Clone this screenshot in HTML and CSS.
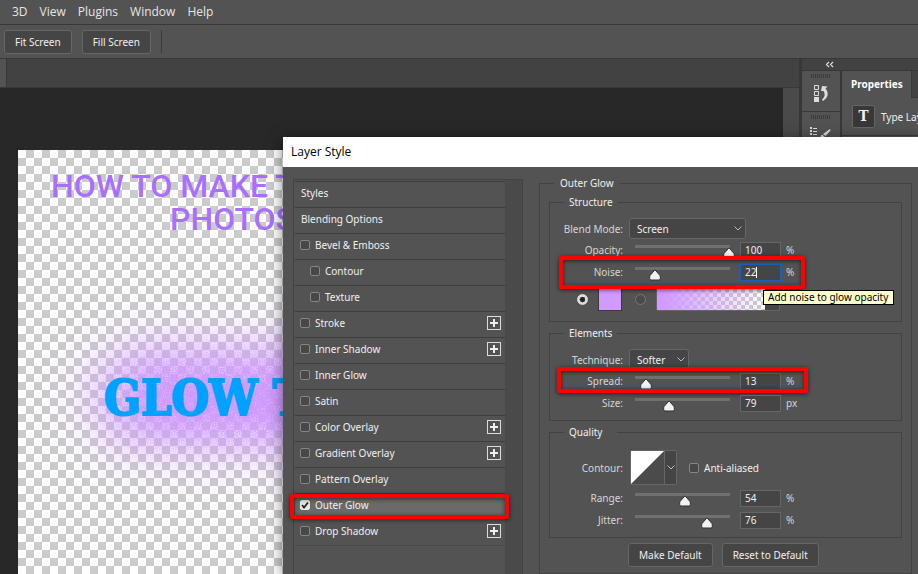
FILE: index.html
```html
<!DOCTYPE html>
<html lang="en">
<head>
<meta charset="utf-8">
<title>Layer Style</title>
<link rel="stylesheet" href="styles.css">
</head>
<body>
<div class="app">
  <nav class="menubar">
    <a href="#">3D</a><a href="#">View</a><a href="#">Plugins</a><a href="#">Window</a><a href="#">Help</a>
  </nav>
  <div class="options">
    <button class="btn" type="button">Fit Screen</button>
    <button class="btn" type="button">Fill Screen</button>
    <span class="divider"></span>
  </div>
  <div class="workspace">
    <main class="editor">
      <div class="tabs"><span class="doc-tab"></span></div>
      <div class="stage">
        <div class="document">
          <svg class="glow" width="600" height="300" viewBox="0 0 600 300" aria-hidden="true">
            <defs>
              <filter id="noise-glow" x="0" y="0" width="600" height="300" filterUnits="userSpaceOnUse" color-interpolation-filters="sRGB">
                <feGaussianBlur in="SourceAlpha" stdDeviation="32 30" result="soft"/>
                <feTurbulence type="fractalNoise" baseFrequency="0.8" numOctaves="2" seed="4" result="n"/>
                <feColorMatrix in="n" type="matrix" values="0 0 0 0 0  0 0 0 0 0  0 0 0 0 0  2.2 0 0 0 -0.6" result="grain"/>
                <feComposite in="soft" in2="grain" operator="arithmetic" k1="0.6" k2="0.85" result="alpha"/>
                <feFlood flood-color="#cf99ff"/>
                <feComposite in2="alpha" operator="in"/>
              </filter>
            </defs>
            <rect x="84" y="106" width="440" height="84" rx="36" filter="url(#noise-glow)"/>
          </svg>
          <h1 class="headline"><span>HOW TO MAKE T</span><span class="second">PHOTOS</span></h1>
          <p class="glow-text">GLOW T</p>
        </div>
        <div class="scrollbar"></div>
      </div>
    </main>
    <aside class="dock">
      <div class="dock-head">
        <svg width="9" height="7" viewBox="0 0 9 7"><path d="M4 1 1.500 3.500 4 6M8 1 5.500 3.500 8 6" fill="none" stroke="#ddd" stroke-width="1.200"/></svg>
      </div>
      <div class="dock-body">
        <div class="strip">
          <div class="group">
            <span class="grip"></span>
            <svg width="18" height="20" viewBox="0 0 18 20"><g fill="none" stroke="#ddd"><path d="M2.500 1.500h4v4h-4zM2.500 7.500h4v4h-4z"/></g><path d="M2 13h5v5H2zM9 7l1-5 5.500.5-2 2c3.500 4 3 9-2.500 12.500l-1-1.500c3-2.500 3.500-5.500 1.500-8.500z" fill="#ddd"/></svg>
          </div>
          <div class="group">
            <span class="grip"></span>
            <svg width="22" height="20" viewBox="0 0 22 20"><path d="M1 2h2v2H1zM1 5h2v2H1zM1 8h2v2H1zM4 3h4v1H4zM4 6h4v1H4zM4 9h4v1H4zM21 4l.5 1.500-5 5.500-2.500-2zM13 9.500l2.500 2c-1 2.500-3 3-5.500 2.500 1.500-1 1.500-3.500 3-4.500z" fill="#ddd"/></svg>
          </div>
        </div>
        <div class="panel">
          <div class="panel-tabs"><b>Properties</b><span class="rest"></span></div>
          <div class="type-row"><span class="type-icon">T</span><span>Type Layer</span></div>
        </div>
      </div>
    </aside>
  </div>
</div>

<section class="dialog" role="dialog" aria-labelledby="title">
  <h2 class="title" id="title">Layer Style</h2>
  <div class="dialog-body">
    <div class="effects">
      <ul class="list">
        <li>Styles</li>
        <li>Blending Options</li>
        <li><label><input class="check" type="checkbox">Bevel &amp; Emboss</label></li>
        <li class="sub"><label><input class="check" type="checkbox">Contour</label></li>
        <li class="sub"><label><input class="check" type="checkbox">Texture</label></li>
        <li><label><input class="check" type="checkbox">Stroke</label><button class="add" type="button" aria-label="Add stroke"></button></li>
        <li><label><input class="check" type="checkbox">Inner Shadow</label><button class="add" type="button" aria-label="Add inner shadow"></button></li>
        <li><label><input class="check" type="checkbox">Inner Glow</label></li>
        <li><label><input class="check" type="checkbox">Satin</label></li>
        <li><label><input class="check" type="checkbox">Color Overlay</label><button class="add" type="button" aria-label="Add color overlay"></button></li>
        <li><label><input class="check" type="checkbox">Gradient Overlay</label><button class="add" type="button" aria-label="Add gradient overlay"></button></li>
        <li><label><input class="check" type="checkbox">Pattern Overlay</label></li>
        <li class="active"><label><input class="check" type="checkbox" checked>Outer Glow</label><span class="mark mark-effect"></span></li>
        <li><label><input class="check" type="checkbox">Drop Shadow</label><button class="add" type="button" aria-label="Add drop shadow"></button></li>
      </ul>
      <div class="track"></div>
    </div>

    <fieldset class="settings">
      <legend>Outer Glow</legend>

      <fieldset class="group-box structure">
        <legend>Structure</legend>
        <div class="row">
          <label for="blend">Blend Mode:</label>
          <select class="select wide" id="blend"><option>Screen</option></select>
        </div>
        <div class="row">
          <label for="opacity">Opacity:</label>
          <input class="slider" type="range" value="100" aria-label="Opacity slider">
          <input class="num" id="opacity" type="text" value="100"><span>%</span>
        </div>
        <div class="row">
          <label for="noise">Noise:</label>
          <input class="slider" type="range" value="21" aria-label="Noise slider">
          <span class="num-wrap"><input class="num editing" id="noise" type="text" value="22"><i class="caret"></i></span><span>%</span>
          <span class="mark mark-noise"></span>
          <span class="tooltip" role="tooltip">Add noise to glow opacity</span>
        </div>
        <div class="paint">
          <input class="radio" type="radio" name="fill" checked aria-label="Solid color">
          <button class="swatch" type="button" aria-label="Glow color"></button>
          <input class="radio second" type="radio" name="fill" aria-label="Gradient">
          <button class="gradient" type="button" aria-label="Glow gradient"><span></span></button>
        </div>
      </fieldset>

      <fieldset class="group-box">
        <legend>Elements</legend>
        <div class="row">
          <label for="technique">Technique:</label>
          <select class="select narrow" id="technique"><option>Softer</option></select>
        </div>
        <div class="row">
          <label for="spread">Spread:</label>
          <input class="slider" type="range" value="12" aria-label="Spread slider">
          <input class="num" id="spread" type="text" value="13"><span>%</span>
          <span class="mark mark-spread"></span>
        </div>
        <div class="row">
          <label for="size">Size:</label>
          <input class="slider" type="range" value="79" max="220" aria-label="Size slider">
          <input class="num" id="size" type="text" value="79"><span>px</span>
        </div>
      </fieldset>

      <fieldset class="group-box">
        <legend>Quality</legend>
        <div class="row contour-row">
          <label for="contour">Contour:</label>
          <div class="contour-tools">
            <button class="contour" id="contour" type="button">
              <svg width="33" height="33" viewBox="0 0 33 33"><path d="M0 0h33L0 33z" fill="#fff"/></svg>
              <span class="drop"></span>
            </button>
            <label class="alias"><input class="check" type="checkbox">Anti-aliased</label>
          </div>
        </div>
        <div class="row">
          <label for="range">Range:</label>
          <input class="slider" type="range" value="53" aria-label="Range slider">
          <input class="num" id="range" type="text" value="54"><span>%</span>
        </div>
        <div class="row">
          <label for="jitter">Jitter:</label>
          <input class="slider" type="range" value="77" aria-label="Jitter slider">
          <input class="num" id="jitter" type="text" value="76"><span>%</span>
        </div>
      </fieldset>

      <div class="actions">
        <button class="btn" type="button">Make Default</button>
        <button class="btn" type="button">Reset to Default</button>
      </div>
    </fieldset>
  </div>
</section>
</body>
</html>
```
FILE: styles.css
```css
* { box-sizing: border-box; }

body {
  margin: 0;
  height: 100vh;
  overflow: hidden;
  background: #282828;
  color: #f0f0f0;
  font: 10px/16px "Noto Sans", "Open Sans", sans-serif;
}

button, input, select { font: inherit; color: inherit; margin: 0; }

.app { display: flex; flex-direction: column; height: 100vh; }

/* Menu and options bars */
.menubar {
  display: flex;
  gap: 12px;
  height: 25px;
  padding: 0 12px;
  background: #535353;
  border-bottom: 1px solid #383838;
  font-family: "Open Sans", sans-serif;
  font-size: 12px;
  line-height: 24px;
}
.menubar a { color: #e6e6e6; text-decoration: none; }

.options {
  display: flex;
  align-items: center;
  gap: 10px;
  height: 34px;
  padding: 0 4px;
  background: #535353;
  border-bottom: 1px solid #383838;
}
.btn {
  height: 24px;
  padding: 0 11px;
  background: #454545;
  border: 1px solid #666;
  border-radius: 3px;
  white-space: nowrap;
}
.options .btn { padding: 0 10px; }
.divider { width: 1px; height: 23px; background: #3c3c3c; }

/* Workspace */
.workspace { display: flex; flex: 1; min-height: 0; }
.editor { display: flex; flex-direction: column; flex: 1; min-width: 0; }
.tabs { height: 29px; background: #424242; border-bottom: 1px solid #383838; }
.doc-tab { display: block; width: 7px; height: 28px; background: #535353; border-right: 1px solid #383838; }
.stage { display: flex; flex: 1; min-height: 0; }
.document {
  position: relative;
  flex: 1;
  margin: 62px 0 0 18px;
  overflow: hidden;
  background: repeating-conic-gradient(#cbcbcb 0 25%, #fff 0 50%) 0 0 / 16px 16px;
}
.scrollbar { width: 16px; background: #4a4a4a; }
.headline {
  position: relative;
  margin: 0;
  padding: 20px 0 0 33px;
  color: #a970ff;
  font: 500 32px/33px Roboto, sans-serif;
  white-space: nowrap;
}
.headline span { display: block; }
.headline .second { padding-left: 119px; }
.glow { position: absolute; left: 0; top: 100px; }
.glow-text {
  position: relative;
  margin: 0;
  padding: 133px 0 0 86px;
  color: #00a2ff;
  font: bold 48px/58px "DejaVu Serif Condensed", "DejaVu Serif", serif;
  -webkit-text-stroke: 2px #00a2ff;
  white-space: nowrap;
}

/* Right dock */
.dock { width: 119px; border-left: 3px solid #383838; background: #383838; }
.dock-head {
  height: 12px;
  padding: 2px 0 0 23px;
  background: #424242;
  border-bottom: 1px solid #383838;
  line-height: 0;
}
.dock-body { display: flex; gap: 2px; }
.strip { width: 38px; }
.group { height: 40px; margin-bottom: 1px; padding: 3px 0 0 9px; background: #535353; }
.group svg { display: block; margin: 6px 0 0 1px; }
.group + .group svg { margin: 6px 0 0 -2px; }
.grip { display: block; width: 20px; height: 4px; background: repeating-linear-gradient(90deg, #3c3c3c 0 1px, #535353 1px 2px); }
.panel { flex: 1; overflow: hidden; background: #535353; white-space: nowrap; }
.panel-tabs { display: flex; height: 27px; line-height: 26px; }
.panel-tabs b { padding: 0 8px 0 9px; color: #fff; }
.rest { flex: 1; background: #424242; border: solid #383838; border-width: 0 0 1px 1px; }
.type-row { display: flex; align-items: center; gap: 6px; height: 38px; padding-left: 10px; border-bottom: 1px solid #3c3c3c; }
.type-icon {
  flex: none;
  width: 23px;
  height: 23px;
  background: #383838;
  border: 1px solid #666;
  border-radius: 2px;
  font: bold 15px/21px "DejaVu Serif Condensed", serif;
  text-align: center;
}

/* Dialog */
.dialog {
  position: absolute;
  inset: 137px 0 0 283px;
  display: flex;
  flex-direction: column;
  background: #535353;
  box-shadow: 0 2px 14px rgba(0, 0, 0, 0.5);
}
.title {
  margin: 0;
  height: 30px;
  padding-left: 8px;
  background: #fff;
  color: #000;
  font-family: "Open Sans", sans-serif;
  font-size: 12px;
  font-weight: 400;
  line-height: 30px;
}
.dialog-body { display: flex; flex: 1; gap: 16px; min-height: 0; padding: 0 6px 0 10px; }

.effects {
  display: flex;
  width: 230px;
  margin-top: 12px;
  border: 1px solid #424242;
  border-bottom: 0;
}
.list { flex: 1; margin: 0; padding: 1px 0 0 1px; list-style: none; }
.list li {
  position: relative;
  display: flex;
  align-items: center;
  justify-content: space-between;
  height: 26px;
  padding: 0 4px 3px 6px;
  border-top: 1px solid #3d3d3d;
}
.list li:last-child { height: 27px; padding-bottom: 3px; border-bottom: 1px solid #484848; }
.list li.active { background: #6a6a6a; }
.list label, .alias { display: flex; align-items: center; gap: 5px; }
.list li:has(label) { padding-left: 5px; }
.list li.sub:has(label) { padding-left: 15px; }
.track { width: 17px; background: #4a4a4a; }

.check {
  appearance: none;
  width: 10px;
  height: 10px;
  background: #484848;
  border: 1px solid #868686;
  border-radius: 2px;
}
.check:checked {
  border-color: #e6e6e6;
  background: #e6e6e6 url("data:image/svg+xml,%3Csvg xmlns='http://www.w3.org/2000/svg' viewBox='0 0 8 8'%3E%3Cpath d='M1 4l2 2.500L7 1.500' fill='none' stroke='%23222' stroke-width='1.800'/%3E%3C/svg%3E");
}
.add {
  width: 14px;
  height: 14px;
  padding: 0;
  border: 1px solid #ddd;
  background:
    linear-gradient(#eee, #eee) center / 8px 2px no-repeat,
    linear-gradient(#eee, #eee) center / 2px 8px no-repeat;
}

/* Settings */
fieldset { min-width: 0; margin: 0; border: 1px solid #424242; }
legend { min-width: 53px; padding: 0 5px; white-space: nowrap; }
.settings { flex: 1; margin-top: 8px; padding: 3px 9px 0; }
.settings > legend { min-width: 63px; margin-left: 5px; padding: 0 6px; }
.group-box { margin-bottom: 3px; padding: 8px 0 6px; }
.group-box legend { margin-left: 14px; }
.structure { padding-bottom: 10px; }

.row {
  position: relative;
  display: grid;
  grid-template-columns: 74px 106px 41px auto;
  column-gap: 5px;
  align-items: center;
  height: 22px;
  color: #d6d6d6;
}
.row:first-of-type { height: 21px; }
.row > label { padding-right: 1px; text-align: right; white-space: nowrap; }

.select {
  appearance: none;
  height: 21px;
  padding: 0 7px;
  border: 1px solid #666;
  border-radius: 3px;
  background: #454545 url("data:image/svg+xml,%3Csvg xmlns='http://www.w3.org/2000/svg' width='8' height='5'%3E%3Cpath d='M.5.5L4 4 7.500.5' fill='none' stroke='%23bbb'/%3E%3C/svg%3E") right 3px center no-repeat;
  color: #f0f0f0;
}
.wide { width: 117px; }
.narrow { width: 60px; }

.slider {
  appearance: none;
  width: 106px;
  height: 16px;
  background: linear-gradient(#707070, #707070) 6px 3px / 95px 3px no-repeat;
}
.slider::-webkit-slider-thumb {
  appearance: none;
  width: 12px;
  height: 12px;
  margin-top: 5px;
  background: url("data:image/svg+xml,%3Csvg xmlns='http://www.w3.org/2000/svg' width='12' height='12'%3E%3Cpath d='M6 .8l4.800 5.500q.5.7.5 1.600v1.800q0 1.300-1.300 1.300H2Q.7 11 .7 9.700V7.900q0-.9.5-1.600z' fill='%23f2f2f2' stroke='%23303030'/%3E%3C/svg%3E") no-repeat;
}
.num {
  width: 41px;
  height: 17px;
  padding: 0 4px;
  background: #454545;
  border: 1px solid #666;
  color: #f0f0f0;
}
.num-wrap { position: relative; display: flex; }
.editing { border-color: #1562c4; outline: 0; }
.caret { position: absolute; left: 16px; top: 3px; width: 1px; height: 11px; background: #fff; }

.paint { display: flex; align-items: center; margin: 5px 0 0 27px; }
.radio {
  appearance: none;
  width: 11px;
  height: 11px;
  background: #4a4a4a;
  border: 1px solid #777;
  border-radius: 50%;
}
.radio:checked { background: radial-gradient(#222 0 2px, #999 3px, #ddd 3px); border-color: #ddd; }
.radio.second { margin: 0 10px 0 13px; }
.swatch { width: 24px; height: 23px; margin-left: 10px; padding: 0; background: #cf9bff; border: 1px solid #3a3a3a; }
.gradient { width: 124px; height: 23px; padding: 0; background: #454545; border: 1px solid #666; border-radius: 2px; }
.gradient span {
  display: block;
  width: 108px;
  height: 21px;
  background:
    linear-gradient(90deg, #cf9bff 5%, rgba(207, 155, 255, 0)),
    repeating-conic-gradient(#cbcbcb 0 25%, #fff 0 50%) 0 0 / 8px 8px;
}

.row.contour-row { height: 39px; grid-template-columns: 74px 1fr; }
.contour-tools { display: flex; align-items: center; gap: 12px; padding-left: 1px; color: #f0f0f0; }
.contour { display: flex; height: 35px; padding: 0; background: #4b4b4b; border: 1px solid #666; border-radius: 2px; }
.drop {
  width: 12px;
  height: 33px;
  border-left: 1px solid #666;
  background: #454545 url("data:image/svg+xml,%3Csvg xmlns='http://www.w3.org/2000/svg' width='8' height='5'%3E%3Cpath d='M.5.5L4 4 7.500.5' fill='none' stroke='%23bbb'/%3E%3C/svg%3E") center no-repeat;
}

.actions { display: flex; gap: 9px; padding: 2px 0 0 79px; }
.actions .btn { padding: 0 10px; }

/* Red call-outs and tooltip over the controls */
.mark {
  position: absolute;
  border: 4px solid #f00;
  border-radius: 3px;
  box-shadow: 0 1px 4px rgba(0, 0, 0, 0.6), inset 0 1px 4px rgba(0, 0, 0, 0.6);
  pointer-events: none;
}
.mark-effect { inset: 0 -4px 0 -5px; }
.mark-noise { left: 9px; top: -5px; width: 246px; height: 33px; }
.mark-spread { left: 7px; top: -3px; width: 251px; height: 26px; }
.tooltip {
  position: absolute;
  left: 213px;
  top: 29px;
  z-index: 1;
  padding: 0 5px 0 4px;
  background: #ffffcc;
  border: 1px solid #000;
  color: #000;
  line-height: 13px;
  white-space: nowrap;
}
```
